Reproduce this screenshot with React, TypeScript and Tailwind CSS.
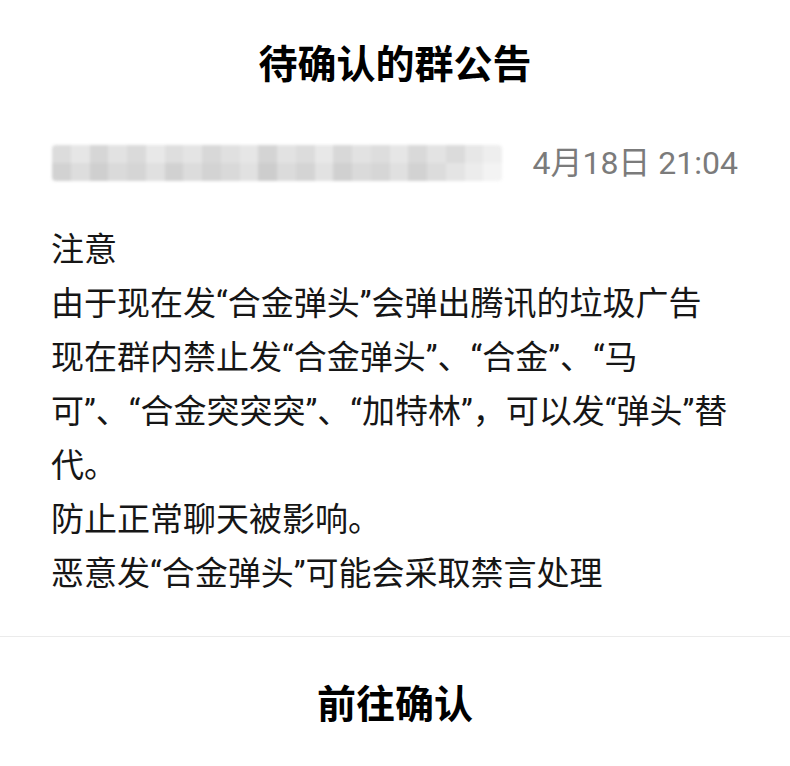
import React from "react";

const lines = [
  "注意",
  "由于现在发“合金弹头”会弹出腾讯的垃圾广告",
  "现在群内禁止发“合金弹头”、“合金”、“马",
  "可”、“合金突突突”、“加特林”，可以发“弹头”替",
  "代。",
  "防止正常聊天被影响。",
  "恶意发“合金弹头”可能会采取禁言处理",
];

// pixelated (mosaic) name, two rows of gray cells
const mosaic = [
  ["#dcdcdc", "#e6e6e6", "#d6d6d6", "#e2e2e2", "#dadada", "#e8e8e8", "#dedede", "#e4e4e4", "#d8d8d8", "#e0e0e0", "#e6e6e6", "#d4d4d4", "#e2e2e2", "#dcdcdc", "#e8e8e8", "#d8d8d8", "#e2e2e2", "#dddddd", "#e6e6e6", "#d9d9d9", "#e3e3e3", "#dbdbdb", "#e7e7e7", "#eeeeee"],
  ["#d2d2d2", "#dddddd", "#cfcfcf", "#dadada", "#d5d5d5", "#e0e0e0", "#d1d1d1", "#dcdcdc", "#d3d3d3", "#d9d9d9", "#e1e1e1", "#cdcdcd", "#dbdbdb", "#d4d4d4", "#e2e2e2", "#d0d0d0", "#dadada", "#d6d6d6", "#e0e0e0", "#d2d2d2", "#dcdcdc", "#e4e4e4", "#ececec", "#f3f3f3"],
];

const App = () => {
  return (
    <div
      className="w-[790px] h-[766px] bg-white flex flex-col text-[#161616]"
      style={{ fontFamily: "Roboto, 'Noto Sans CJK SC', sans-serif" }}
    >
      <header className="pt-[39px] text-center">
        <h1 className="text-[39px] leading-[52px] font-bold text-black">待确认的群公告</h1>
      </header>

      <section className="mt-[52px] h-[40px] pl-[52px] pr-[52px] flex items-center justify-between">
        <div className="w-[450px] h-[36px] flex flex-col blur-[1.5px] rounded-sm overflow-hidden">
          {mosaic.map((row, i) => (
            <div key={i} className="flex flex-1">
              {row.map((c, j) => (
                <div key={j} className="flex-1" style={{ backgroundColor: c }} />
              ))}
            </div>
          ))}
        </div>
        <span className="text-[32px] leading-[40px] text-[#7b7b7b]">4月18日 21:04</span>
      </section>

      <section className="mt-[40px] pl-[51px] flex flex-col">
        {lines.map((line, i) => (
          <p key={i} className="text-[33px] leading-[54px] whitespace-nowrap">
            {line}
          </p>
        ))}
      </section>

      <div className="mt-[35px] h-px bg-[#ebebeb]" />

      <button className="flex-1 flex items-center justify-center pt-[6px]">
        <span className="text-[39px] leading-[52px] font-bold text-black">前往确认</span>
      </button>
    </div>
  );
};

export default App;
